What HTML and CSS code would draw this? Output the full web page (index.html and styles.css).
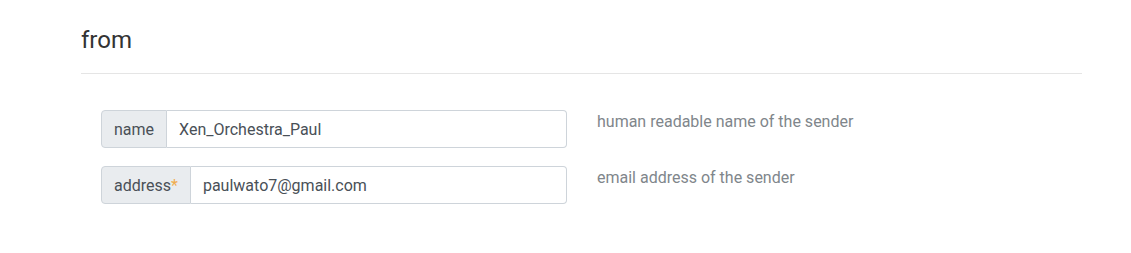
FILE: index.html
```html
<!DOCTYPE html>
<html>
<head>
<meta charset="utf-8">
<link rel="stylesheet" href="styles.css">
</head>
<body>
<section class="panel">
  <h4 class="title">from</h4>
  <hr class="rule">
  <div class="form">
    <div class="row">
      <div class="group">
        <span class="addon">name</span>
        <input class="control" type="text" value="Xen_Orchestra_Paul">
      </div>
      <div class="help">human readable name of the sender</div>
    </div>
    <div class="row">
      <div class="group">
        <span class="addon">address<span class="req">*</span></span>
        <input class="control" type="text" value="paulwato7@gmail.com">
      </div>
      <div class="help">email address of the sender</div>
    </div>
  </div>
</section>
</body>
</html>
```

FILE: styles.css
```css
html, body {
  margin: 0;
  padding: 0;
  background: #fff;
  font-family: Roboto, "Liberation Sans", sans-serif;
}
.panel {
  width: 1001px;
  margin-left: 81px;
  padding-top: 26px;
}
.title {
  margin: 0;
  font-size: 24px;
  line-height: 29px;
  font-weight: 400;
  color: #333;
}
.rule {
  margin: 18px 0 0 0;
  border: 0;
  border-top: 1px solid #e5e5e5;
  height: 0;
}
.form {
  padding: 36px 0 0 20px;
}
.row {
  display: flex;
  gap: 30px;
  margin-bottom: 18px;
}
.group {
  display: flex;
  width: 466px;
  height: 38px;
  box-sizing: border-box;
}
.addon {
  display: flex;
  align-items: center;
  padding: 0 12px;
  background: #e9ecef;
  border: 1px solid #ced4da;
  border-radius: 4px 0 0 4px;
  color: #495057;
  font-size: 16px;
}
.req {
  color: #f0ad4e;
}
.control {
  flex: 1;
  min-width: 0;
  box-sizing: border-box;
  height: 38px;
  margin: 0;
  padding: 0 12px;
  border: 1px solid #ced4da;
  border-left: 0;
  border-radius: 0 4px 4px 0;
  font-family: Roboto, "Liberation Sans", sans-serif;
  font-size: 16px;
  color: #495057;
  background: #fff;
  outline: none;
}
.help {
  font-size: 16px;
  line-height: 24px;
  color: #80868b;
}
```
